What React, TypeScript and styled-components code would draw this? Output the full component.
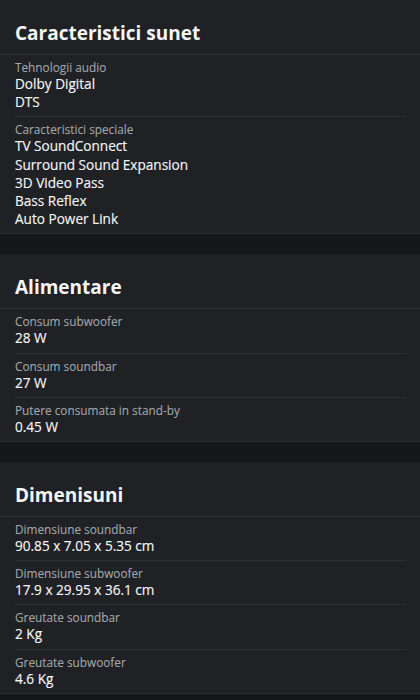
import { createGlobalStyle } from 'styled-components';
import styled from 'styled-components';

const COLORS = {
  PAGE: '#15171a',
  CARD: '#1f2125',
  LINE: '#2c2f33',
  TEXT: '#f4f5f6',
  MUTED: '#a2a6ab',
};

const SECTIONS = [
  {
    title: 'Caracteristici sunet',
    items: [
      { label: 'Tehnologii audio', values: ['Dolby Digital', 'DTS'] },
      {
        label: 'Caracteristici speciale',
        values: ['TV SoundConnect', 'Surround Sound Expansion', '3D Video Pass', 'Bass Reflex', 'Auto Power Link'],
      },
    ],
  },
  {
    title: 'Alimentare',
    items: [
      { label: 'Consum subwoofer', values: ['28 W'] },
      { label: 'Consum soundbar', values: ['27 W'] },
      { label: 'Putere consumata in stand-by', values: ['0.45 W'] },
    ],
  },
  {
    title: 'Dimenisuni',
    items: [
      { label: 'Dimensiune soundbar', values: ['90.85 x 7.05 x 5.35 cm'] },
      { label: 'Dimensiune subwoofer', values: ['17.9 x 29.95 x 36.1 cm'] },
      { label: 'Greutate soundbar', values: ['2 Kg'] },
      { label: 'Greutate subwoofer', values: ['4.6 Kg'] },
    ],
  },
];

const GlobalStyle = createGlobalStyle`
  html, body {
    margin: 0;
    padding: 0;
    background: ${COLORS.PAGE};
  }
  body {
    font-family: 'Open Sans', 'Noto Sans', sans-serif;
  }
`;

const SpecItem = ({ label, values }: { label: string; values: string[] }) => {
  return (
    <Item>
      <Label>{label}</Label>
      {values.map((v) => (
        <Value key={v}>{v}</Value>
      ))}
    </Item>
  );
};

const App = () => {
  return (
    <>
      <GlobalStyle />
      <Page>
        {SECTIONS.map((section) => (
          <Card key={section.title}>
            <Title>{section.title}</Title>
            <ItemList>
              {section.items.map((item) => (
                <SpecItem key={item.label} {...item} />
              ))}
            </ItemList>
          </Card>
        ))}
      </Page>
    </>
  );
};

export default App;

const Page = styled.div`
  display: flex;
  flex-direction: column;
  gap: 20px;
  padding-bottom: 20px;
  background: ${COLORS.PAGE};
`;

const Card = styled.section`
  background: ${COLORS.CARD};
  border-bottom: 1px solid ${COLORS.LINE};
`;

const Title = styled.h2`
  margin: 0;
  padding: 19px 15px 7px;
  font-size: 19px;
  line-height: 28px;
  font-weight: 700;
  color: ${COLORS.TEXT};
  border-bottom: 1px solid ${COLORS.LINE};
`;

const ItemList = styled.div`
  display: flex;
  flex-direction: column;
  padding: 0 14px 0 15px;
`;

const Item = styled.div`
  padding: 4px 0 5px;
  border-bottom: 1px solid ${COLORS.LINE};
  &:last-child {
    border-bottom: none;
  }
`;

const Label = styled.div`
  font-size: 11.8px;
  line-height: 16px;
  color: ${COLORS.MUTED};
  -webkit-text-stroke: 0.1px ${COLORS.MUTED};
`;

const Value = styled.div`
  font-size: 13.6px;
  line-height: 18.2px;
  color: ${COLORS.TEXT};
  -webkit-text-stroke: 0.15px ${COLORS.TEXT};
`;
